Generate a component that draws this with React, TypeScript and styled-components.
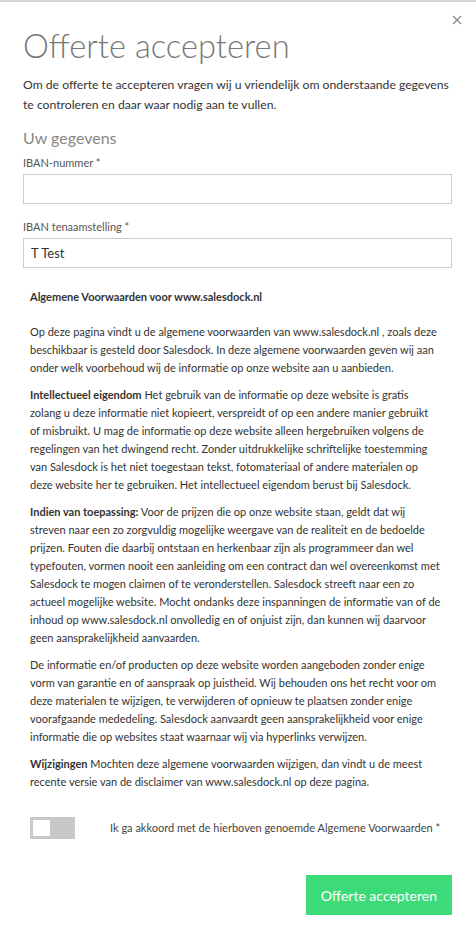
import React from "react";
import styled, { createGlobalStyle } from "styled-components";

const Global = createGlobalStyle`
  html, body { margin: 0; padding: 0; background: #fff; }
  body { font-family: Lato, "Open Sans", Arial, sans-serif; color: #333; }
  * { box-sizing: border-box; }
`;

const Modal = styled.div`
  position: relative;
  width: 476px;
  min-height: 948px;
  border-top: 2px solid #d6d6d6;
  padding: 0 24px 0 23px;
  background: #fff;
`;

const Close = styled.button`
  position: absolute;
  top: 11px;
  right: 12px;
  width: 14px;
  height: 14px;
  padding: 0;
  border: 0;
  background: transparent;
  display: flex;
  align-items: center;
  justify-content: center;
  cursor: pointer;
`;

const Title = styled.h1`
  margin: 24px 0 0;
  font-size: 32.7px;
  line-height: 40px;
  font-weight: 300;
  color: #777;
`;

const Intro = styled.p`
  margin: 9px 0 0;
  font-size: 12.2px;
  line-height: 20px;
  color: #333;
`;

const SectionTitle = styled.h2`
  margin: 11px 0 0;
  font-size: 16px;
  line-height: 24px;
  font-weight: 400;
  color: #888;
`;

const Field = styled.div<{ $top: number }>`
  display: flex;
  flex-direction: column;
  margin-top: ${(p) => p.$top}px;
`;

const Label = styled.label`
  font-size: 11px;
  line-height: 14px;
  color: #555;
  margin-bottom: 4px;
`;

const Input = styled.input`
  width: 100%;
  height: 30px;
  border: 1px solid #cdcdcd;
  border-radius: 0;
  padding: 0 7px;
  font-family: inherit;
  font-size: 13px;
  color: #333;
  outline: none;
`;

const Terms = styled.div`
  padding: 0 11.2px 0 7px;
  margin-top: 20px;
  font-size: 11px;
  line-height: 18px;
  color: #333;
`;

const TermsHeader = styled.p`
  margin: 0 0 17px;
  font-weight: 700;
`;

const Para = styled.p`
  margin: 0 0 9px;
  strong { font-weight: 700; }
`;

const AgreeRow = styled.div`
  display: flex;
  align-items: center;
  margin-top: 26px;
  padding-left: 7px;
`;

const Toggle = styled.div`
  width: 45px;
  height: 22px;
  background: #c8c8c8;
  padding: 3px;
  flex-shrink: 0;
`;

const Knob = styled.div`
  width: 17px;
  height: 16px;
  background: #fff;
`;

const AgreeLabel = styled.span`
  margin-left: 35px;
  font-size: 11px;
  line-height: 18px;
  color: #444;
`;

const Footer = styled.div`
  display: flex;
  justify-content: flex-end;
  margin-top: 36px;
`;

const Submit = styled.button`
  height: 40px;
  padding: 0 15px;
  border: 0;
  border-radius: 0;
  background: #3dda7a;
  color: #fff;
  font-family: inherit;
  font-size: 14px;
  cursor: pointer;
`;

export default function App() {
  return (
    <>
      <Global />
      <Modal>
        <Close aria-label="Sluiten">
          <svg width="10" height="10" viewBox="0 0 10 10">
            <path d="M1 1 L9 9 M9 1 L1 9" stroke="#8a8a8a" strokeWidth="1.2" fill="none" />
          </svg>
        </Close>
        <Title>Offerte accepteren</Title>
        <Intro>
          Om de offerte te accepteren vragen wij u vriendelijk om onderstaande gegevens te controleren en daar waar nodig aan te vullen.
        </Intro>
        <SectionTitle>Uw gegevens</SectionTitle>
        <Field $top={6}>
          <Label>IBAN-nummer *</Label>
          <Input defaultValue="" />
        </Field>
        <Field $top={16}>
          <Label>IBAN tenaamstelling *</Label>
          <Input defaultValue="T Test" />
        </Field>
        <Terms>
          <TermsHeader>Algemene Voorwaarden voor www.salesdock.nl</TermsHeader>
          <Para>
            Op deze pagina vindt u de algemene voorwaarden van www.salesdock.nl , zoals deze beschikbaar is gesteld door Salesdock. In deze algemene voorwaarden geven wij aan onder welk voorbehoud wij de informatie op onze website aan u aanbieden.
          </Para>
          <Para>
            <strong>Intellectueel eigendom</strong> Het gebruik van de informatie op deze website is gratis zolang u deze informatie niet kopieert, verspreidt of op een andere manier gebruikt of misbruikt. U mag de informatie op deze website alleen hergebruiken volgens de regelingen van het dwingend recht. Zonder uitdrukkelijke schriftelijke toestemming van Salesdock is het niet toegestaan tekst, fotomateriaal of andere materialen op deze website her te gebruiken. Het intellectueel eigendom berust bij Salesdock.
          </Para>
          <Para>
            <strong>Indien van toepassing:</strong> Voor de prijzen die op onze website staan, geldt dat wij streven naar een zo zorgvuldig mogelijke weergave van de realiteit en de bedoelde prijzen. Fouten die daarbij ontstaan en herkenbaar zijn als programmeer dan wel typefouten, vormen nooit een aanleiding om een contract dan wel overeenkomst met Salesdock te mogen claimen of te veronderstellen. Salesdock streeft naar een zo actueel mogelijke website. Mocht ondanks deze inspanningen de informatie van of de inhoud op www.salesdock.nl onvolledig en of onjuist zijn, dan kunnen wij daarvoor geen aansprakelijkheid aanvaarden.
          </Para>
          <Para>
            De informatie en/of producten op deze website worden aangeboden zonder enige vorm van garantie en of aanspraak op juistheid. Wij behouden ons het recht voor om deze materialen te wijzigen, te verwijderen of opnieuw te plaatsen zonder enige voorafgaande mededeling. Salesdock aanvaardt geen aansprakelijkheid voor enige informatie die op websites staat waarnaar wij via hyperlinks verwijzen.
          </Para>
          <Para>
            <strong>Wijzigingen</strong> Mochten deze algemene voorwaarden wijzigen, dan vindt u de meest recente versie van de disclaimer van www.salesdock.nl op deze pagina.
          </Para>
        </Terms>
        <AgreeRow>
          <Toggle>
            <Knob />
          </Toggle>
          <AgreeLabel>Ik ga akkoord met de hierboven genoemde Algemene Voorwaarden *</AgreeLabel>
        </AgreeRow>
        <Footer>
          <Submit>Offerte accepteren</Submit>
        </Footer>
      </Modal>
    </>
  );
}
